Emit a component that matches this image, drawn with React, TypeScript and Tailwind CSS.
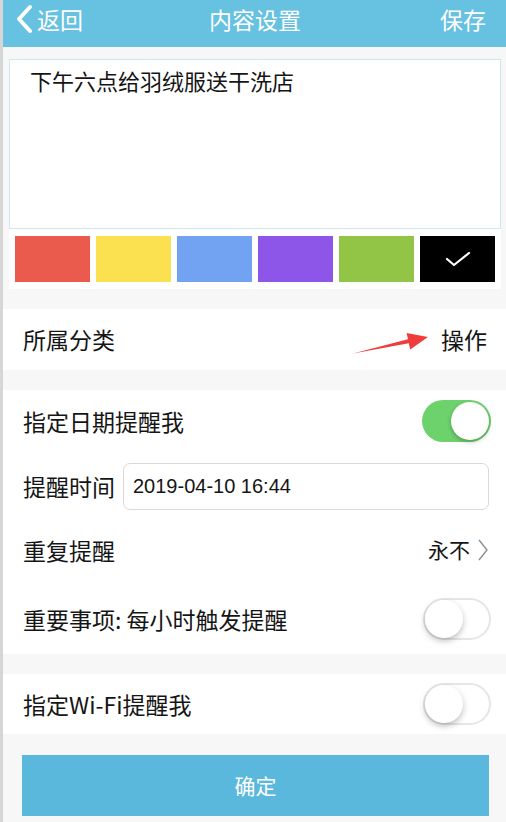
import React from 'react'

const font = { fontFamily: '"Noto Sans CJK SC", "Noto Sans", sans-serif' }

function Toggle({ on }: { on: boolean }) {
  return (
    <div
      className={
        on
          ? 'relative h-[42px] w-[69px] rounded-full bg-[#6dd16c]'
          : 'relative h-[42px] w-[68px] rounded-full border-2 border-[#e6e6e6] bg-white'
      }
    >
      <div
        className={
          on
            ? 'absolute right-[2px] top-[2px] h-[38px] w-[38px] rounded-full bg-white shadow-[0_2px_4px_rgba(0,0,0,0.25)]'
            : 'absolute left-0 top-0 h-[38px] w-[38px] rounded-full bg-white shadow-[0_3px_6px_rgba(0,0,0,0.25)]'
        }
      />
    </div>
  )
}

const swatches = ['#ea5a4d', '#fbe050', '#72a2f2', '#8e56e8', '#92c445']

export default function App() {
  return (
    <div className="flex h-[822px] w-[506px] overflow-hidden" style={font}>
      <div className="w-[3px] bg-[#d6d6d6]" />
      <div className="flex flex-1 flex-col bg-[#f7f7f7] text-[23px] text-[#151515]">
        {/* header */}
        <div className="grid h-[47px] grid-cols-3 items-start bg-[#67c1e0] pl-[11px] pr-[20px] pt-[2px] text-[23px] text-white">
          <div className="flex items-center">
            <svg width="20" height="30" viewBox="0 0 20 30">
              <path d="M16 3 L5 15 L16 27" fill="none" stroke="white" strokeWidth="4" strokeLinecap="round" strokeLinejoin="round" />
            </svg>
            <span className="ml-[3px]">返回</span>
          </div>
          <span className="pl-[10px] text-center">内容设置</span>
          <span className="text-right">保存</span>
        </div>

        {/* note text */}
        <div className="ml-[6px] mr-[5px] mt-[12px] h-[170px] border border-[#cfe8ef] bg-white px-[20px] pt-[6px] text-[22px] leading-[28px]">
          下午六点给羽绒服送干洗店
        </div>

        {/* colours */}
        <div className="ml-[6px] mr-[5px] flex gap-[6px] bg-white px-[6px] py-[7px]">
          {swatches.map((c) => (
            <div key={c} className="h-[46px] w-[75px]" style={{ backgroundColor: c }} />
          ))}
          <div className="flex h-[46px] w-[75px] items-center justify-center bg-black">
            <svg width="26" height="18" viewBox="0 0 26 18">
              <path d="M2 9 L9 15 L24 3" fill="none" stroke="white" strokeWidth="2.2" strokeLinecap="round" strokeLinejoin="round" />
            </svg>
          </div>
        </div>

        {/* category */}
        <div className="relative mt-[20px] flex h-[61px] items-center justify-between bg-white pl-[20px] pr-[19px]">
          <span>所属分类</span>
          <span>操作</span>
          <svg className="absolute left-[345px] top-[22px]" width="90" height="30" viewBox="0 0 90 30">
            <polygon points="5,22.6 60,8.2 58.6,1.9 80,6 62.2,18.5 60.8,12.2" fill="#f23c3c" />
          </svg>
        </div>

        {/* reminders */}
        <div className="mt-[20px] flex flex-col bg-white pl-[20px] pr-[15px]">
          <div className="flex h-[62px] items-center justify-between">
            <span>指定日期提醒我</span>
            <Toggle on />
          </div>
          <div className="flex h-[64px] items-center pt-[4px]">
            <span>提醒时间</span>
            <div
              className="ml-[8px] mr-[2px] flex h-[47px] flex-1 items-center rounded-[7px] border border-[#d9d9d9] pl-[9px] text-[20px]"
              style={{ fontFamily: '"Liberation Sans", "Noto Sans CJK SC", sans-serif' }}
            >
              2019-04-10 16:44
            </div>
          </div>
          <div className="flex h-[68px] items-center justify-between">
            <span>重复提醒</span>
            <div className="flex items-center pr-[2px] text-[21px]">
              <span>永不</span>
              <svg className="ml-[7px]" width="12" height="22" viewBox="0 0 12 22">
                <path d="M2 1 L10 11 L2 21" fill="none" stroke="#8a8a8a" strokeWidth="1.3" />
              </svg>
            </div>
          </div>
          <div className="flex h-[70px] items-center justify-between">
            <span>重要事项: 每小时触发提醒</span>
            <Toggle on={false} />
          </div>
        </div>

        {/* wifi */}
        <div className="mt-[20px] flex h-[60px] items-center justify-between bg-white pl-[20px] pr-[15px]">
          <span>指定Wi-Fi提醒我</span>
          <Toggle on={false} />
        </div>

        <button className="ml-[19px] mr-[17px] mt-[21px] flex h-[61px] items-center justify-center bg-[#5ab8dc] text-[21px] text-white">
          确定
        </button>
      </div>
    </div>
  )
}
